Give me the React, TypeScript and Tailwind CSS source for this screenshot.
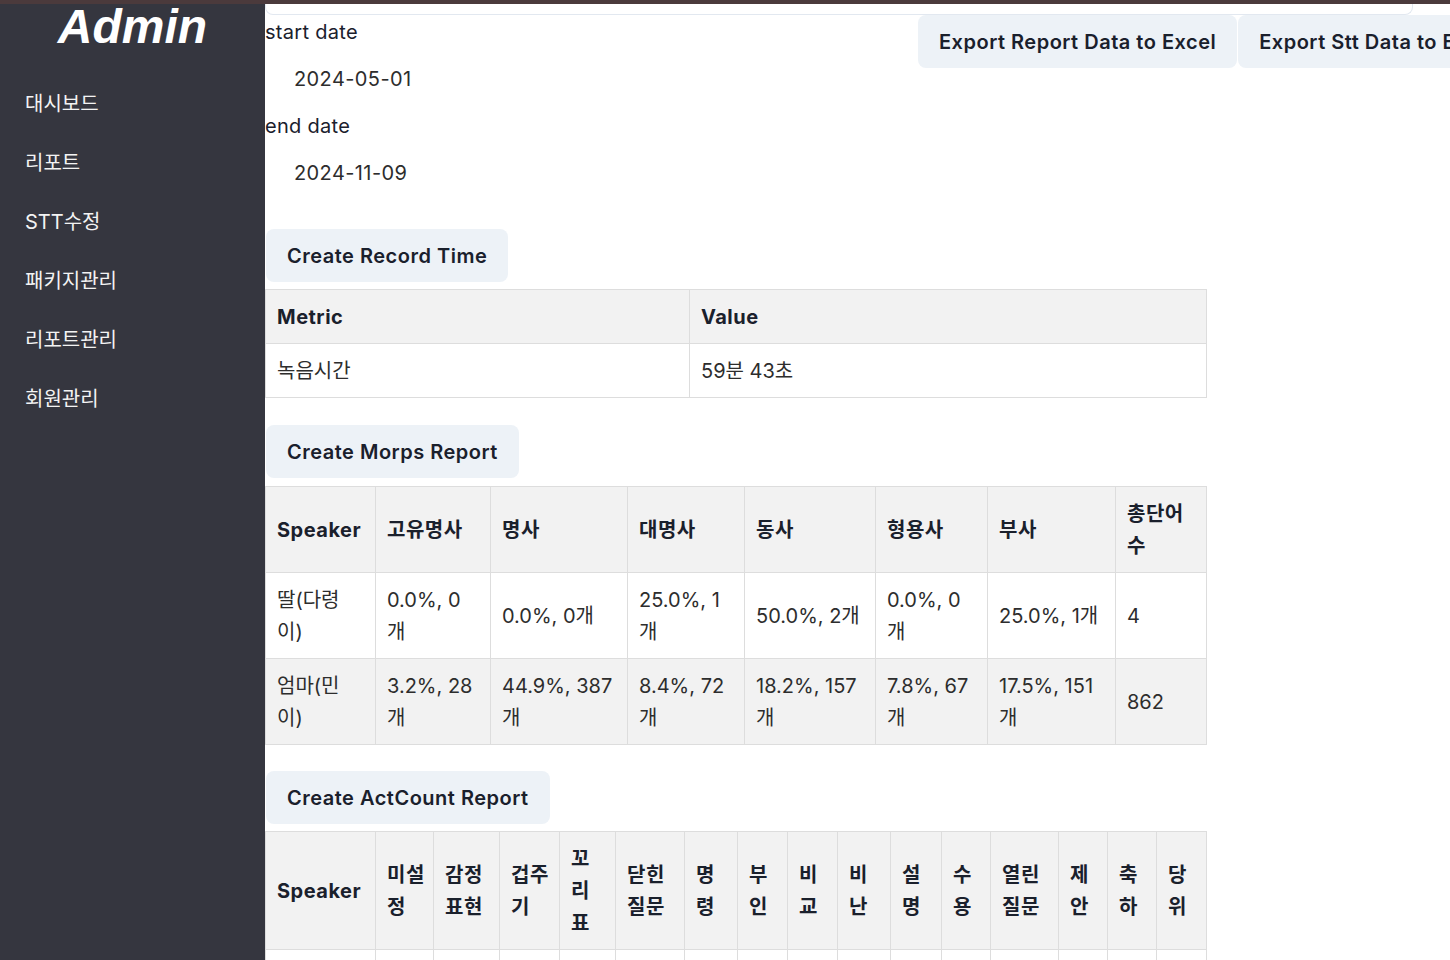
import React from "react";

const menu = ["대시보드", "리포트", "STT수정", "패키지관리", "리포트관리", "회원관리"];

const morpsHead = ["Speaker", "고유명사", "명사", "대명사", "동사", "형용사", "부사", "총단어\n수"];
const morpsCols = [110, 115, 137, 117, 131, 112, 128, 91];
const morpsRows = [
  ["딸(다령\n이)", "0.0%, 0\n개", "0.0%, 0개", "25.0%, 1\n개", "50.0%, 2개", "0.0%, 0\n개", "25.0%, 1개", "4"],
  ["엄마(민\n이)", "3.2%, 28\n개", "44.9%, 387\n개", "8.4%, 72\n개", "18.2%, 157\n개", "7.8%, 67\n개", "17.5%, 151\n개", "862"],
];

const actHead = [
  "Speaker", "미설\n정", "감정\n표현", "겁주\n기", "꼬\n리\n표", "닫힌\n질문", "명\n령", "부\n인",
  "비\n교", "비\n난", "설\n명", "수\n용", "열린\n질문", "제\n안", "축\n하", "당\n위",
];
const actCols = [110, 58, 66, 60, 56, 69, 53, 50, 50, 53, 51, 49, 68, 49, 49, 50];
const actRows = [
  ["딸(다령\n이)", "0", "0", "0", "0", "1", "0", "0", "0", "0", "1", "0", "0", "0", "0", "0"],
  ["엄마(민\n이)", "12", "8", "1", "3", "41", "17", "2", "0", "4", "36", "9", "22", "6", "3", "2"],
];

const Btn = ({ children }: { children: React.ReactNode }) => (
  <button className="h-[53px] shrink-0 whitespace-nowrap rounded-[8px] bg-[#edf2f7] px-[21px] text-[20px] font-semibold tracking-[0.5px] text-[#1a202c]">
    {children}
  </button>
);

const Table = ({ cols, head, rows }: { cols: number[]; head: string[]; rows: string[][] }) => (
  <table className="w-[941px] table-fixed border-collapse text-[20px] leading-[32px]">
    <colgroup>
      {cols.map((w, i) => (
        <col key={i} style={{ width: w }} />
      ))}
    </colgroup>
    <thead>
      <tr className="bg-[#f2f2f2]">
        {head.map((h, i) => (
          <th
            key={i}
            className="whitespace-pre border border-[#dddddd] px-[11px] py-[10.5px] text-left align-middle font-bold tracking-[0.5px] text-[#1a202c]"
          >
            {h}
          </th>
        ))}
      </tr>
    </thead>
    <tbody>
      {rows.map((r, ri) => (
        <tr key={ri} className={ri % 2 === 1 ? "bg-[#f2f2f2]" : "bg-white"}>
          {r.map((c, ci) => (
            <td
              key={ci}
              className="whitespace-pre border border-[#dddddd] px-[11px] py-[10.5px] align-middle text-[#2d2d2d]"
            >
              {c}
            </td>
          ))}
        </tr>
      ))}
    </tbody>
  </table>
);

export default function App() {
  return (
    <div className="flex h-screen w-full flex-col overflow-hidden bg-white font-['Inter','Noto_Sans_CJK_KR',sans-serif]">
      <div className="h-[4px] w-full shrink-0 bg-[#4b3a3c]" />
      <div className="flex min-h-0 flex-1">
        {/* sidebar */}
        <aside className="w-[265px] shrink-0 bg-[#35363f] text-white">
          <div className="flex h-[46px] items-center justify-center font-['Liberation_Sans',Arial,sans-serif] text-[48px] font-bold italic leading-none">
            Admin
          </div>
          <nav className="pt-[24px]">
            {menu.map((m) => (
              <div key={m} className="flex h-[59px] items-center pl-[25px] text-[20px] text-[#f3f3f3]">
                {m}
              </div>
            ))}
          </nav>
        </aside>

        {/* main */}
        <main className="min-w-0 flex-1">
          <div className="h-[11px] w-[1148px] rounded-b-[8px] border border-t-0 border-[#e2e8f0]" />
          <div className="flex items-start">
            <div className="w-[653px] shrink-0 pt-[2px] text-[20px] tracking-[0.3px]">
              <div className="h-[30px] leading-[30px] text-[#1a202c]">start date</div>
              <div className="flex h-[64px] items-center pl-[29px] tracking-[0.4px] text-[#2d2d2d]">2024-05-01</div>
              <div className="h-[30px] leading-[30px] text-[#1a202c]">end date</div>
              <div className="flex h-[64px] items-center pl-[29px] tracking-[0.4px] text-[#2d2d2d]">2024-11-09</div>
            </div>
            <div className="flex gap-px">
              <Btn>Export Report Data to Excel</Btn>
              <Btn>Export Stt Data to Excel</Btn>
            </div>
          </div>

          <div className="ml-px mt-[24px]">
            <Btn>Create Record Time</Btn>
          </div>
          <div className="mt-[7px]">
            <Table cols={[424, 517]} head={["Metric", "Value"]} rows={[["녹음시간", "59분 43초"]]} />
          </div>

          <div className="ml-px mt-[27px]">
            <Btn>Create Morps Report</Btn>
          </div>
          <div className="mt-[8px]">
            <Table cols={morpsCols} head={morpsHead} rows={morpsRows} />
          </div>

          <div className="ml-px mt-[26px]">
            <Btn>Create ActCount Report</Btn>
          </div>
          <div className="mt-[7px]">
            <Table cols={actCols} head={actHead} rows={actRows} />
          </div>
        </main>
      </div>
    </div>
  );
}
